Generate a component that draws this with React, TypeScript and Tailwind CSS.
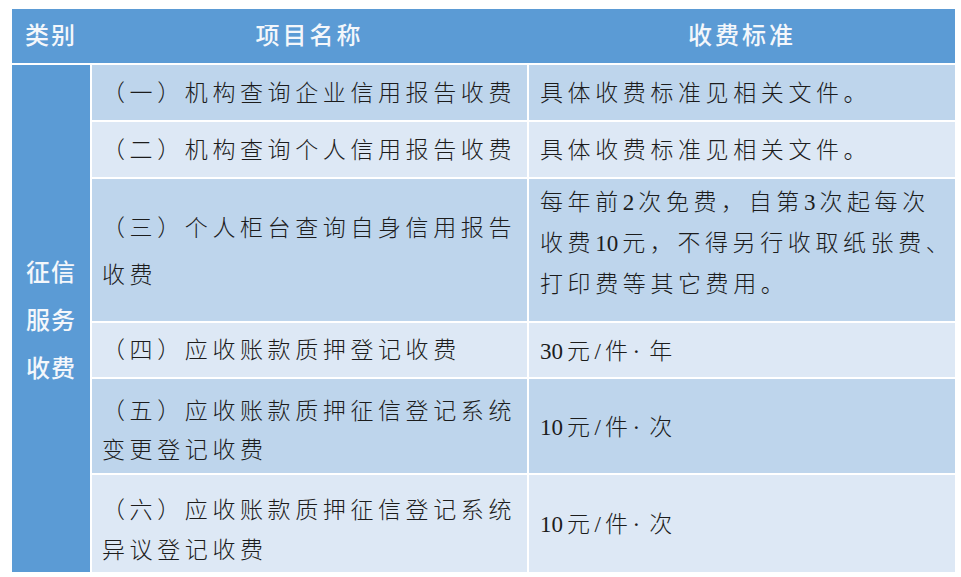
const font = { fontFamily: '"Liberation Serif", "Noto Sans CJK SC", serif' };

type Row = {
  name: string[];
  fee: string[];
  tone: "dark" | "light";
  nameLead: string;
  nameNudge: string;
  feeNudge: string;
};

const rows: Row[] = [
  { name: ["（一）机构查询企业信用报告收费"], fee: ["具体收费标准见相关文件。"], tone: "dark", nameLead: "leading-[40px]", nameNudge: "pt-[2px]", feeNudge: "pt-[2px]" },
  { name: ["（二）机构查询个人信用报告收费"], fee: ["具体收费标准见相关文件。"], tone: "light", nameLead: "leading-[40px]", nameNudge: "pt-[2px]", feeNudge: "pt-[2px]" },
  {
    name: ["（三）个人柜台查询自身信用报告", "收费"],
    fee: ["每年前2次免费，自第3次起每次", "收费10元，不得另行收取纸张费、", "打印费等其它费用。"],
    tone: "dark",
    nameLead: "leading-[47px]",
    nameNudge: "pt-[4px]",
    feeNudge: "pb-[14px]",
  },
  { name: ["（四）应收账款质押登记收费"], fee: ["30元/件·年"], tone: "light", nameLead: "leading-[40px]", nameNudge: "pt-[2px]", feeNudge: "pt-[2px]" },
  { name: ["（五）应收账款质押征信登记系统", "变更登记收费"], fee: ["10元/件·次"], tone: "dark", nameLead: "leading-[39px]", nameNudge: "pt-[10px]", feeNudge: "pt-[2px]" },
  { name: ["（六）应收账款质押征信登记系统", "异议登记收费"], fee: ["10元/件·次"], tone: "light", nameLead: "leading-[40px]", nameNudge: "pt-[14px]", feeNudge: "pt-[2px]" },
];

// the source snaps CJK to a grid but sets latin runs tight
function Line({ text }: { text: string }) {
  const parts = text.match(/[0-9/]+|·|[^0-9/·]+/g) ?? [];
  return (
    <div className="whitespace-nowrap">
      {parts.map((p, i) =>
        /^[0-9/]+$/.test(p) ? (
          <span key={i} className="mr-[4px] tracking-normal">
            {p}
          </span>
        ) : p === "·" ? (
          <span key={i} className="pr-[9px] tracking-normal">
            {p}
          </span>
        ) : (
          <span key={i}>{p}</span>
        ),
      )}
    </div>
  );
}

export default function App() {
  return (
    <div className="min-h-screen bg-white pt-[9px] pl-[12px]" style={font}>
      <div className="w-[943px]">
        <div className="grid h-[54px] grid-cols-[78px_435px_426px] gap-x-[2px] bg-[#5b9bd5] text-[24px] font-medium text-[#f4f7fb]">
          <div className="flex items-center justify-center tracking-[2px]">类别</div>
          <div className="flex items-center justify-center tracking-[3px]">项目名称</div>
          <div className="flex items-center justify-center tracking-[3px]">收费标准</div>
        </div>

        <div className="mt-[2px] grid grid-cols-[78px_435px_426px] grid-rows-[55px_55px_142px_54px_94px_97px] gap-[2px]">
          <div className="row-span-6 flex items-center justify-center bg-[#5b9bd5] pt-[4px] text-[24px] font-medium leading-[48px] tracking-[1px] text-[#f4f7fb]">
            <div className="text-center">
              征信
              <br />
              服务
              <br />
              收费
            </div>
          </div>

          {rows.map((r, i) => {
            const bg = r.tone === "dark" ? "bg-[#bed5ec]" : "bg-[#dde8f5]";
            return [
              <div
                key={`n${i}`}
                className={`flex items-center pl-[10px] ${bg} ${r.nameNudge} ${r.nameLead} text-[23px] font-light tracking-[4.6px] text-[#1c1c1c]`}
              >
                <div>
                  {r.name.map((l) => (
                    <Line key={l} text={l} />
                  ))}
                </div>
              </div>,
              <div
                key={`f${i}`}
                className={`flex items-center pl-[11px] ${r.feeNudge} ${bg} text-[23px] font-light leading-[41px] tracking-[4.6px] text-[#1c1c1c]`}
              >
                <div>
                  {r.fee.map((l) => (
                    <Line key={l} text={l} />
                  ))}
                </div>
              </div>,
            ];
          })}
        </div>
      </div>
    </div>
  );
}
